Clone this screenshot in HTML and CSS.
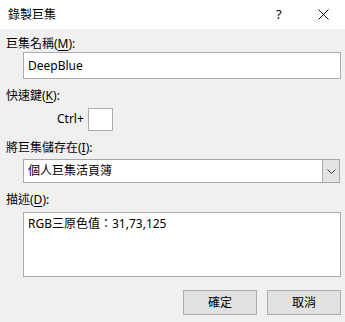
FILE: index.html
```html
<!DOCTYPE html>
<html lang="zh-Hant">
<head>
<meta charset="utf-8">
<title>錄製巨集</title>
<link rel="stylesheet" href="styles.css">
</head>
<body>
<div class="dialog">
  <div class="titlebar">
    <span class="title">錄製巨集</span>
    <span class="help">?</span>
    <span class="close">
      <svg width="11" height="11" viewBox="0 0 11 11"><path d="M0.5 0.5 L10.5 10.5 M10.5 0.5 L0.5 10.5" stroke="#111" stroke-width="1" fill="none"/></svg>
    </span>
  </div>
  <div class="content">
    <div class="label l1">巨集名稱(<u>M</u>):</div>
    <div class="field name">DeepBlue</div>
    <div class="label l2">快速鍵(<u>K</u>):</div>
    <div class="ctrlrow">
      <span class="ctrl">Ctrl+</span>
      <div class="field key"></div>
    </div>
    <div class="label l3">將巨集儲存在(<u>I</u>):</div>
    <div class="select">
      <div class="selval">個人巨集活頁簿</div>
      <div class="selbtn">
        <svg width="9" height="5" viewBox="0 0 9 5"><path d="M0.5 0.5 L4.5 4.5 L8.5 0.5" stroke="#444" stroke-width="1" fill="none"/></svg>
      </div>
    </div>
    <div class="label l4">描述(<u>D</u>):</div>
    <div class="field desc">RGB三原色值：31,73,125</div>
    <div class="buttons">
      <div class="btn">確定</div>
      <div class="btn">取消</div>
    </div>
  </div>
</div>
</body>
</html>
```
FILE: styles.css
```css
* { box-sizing: border-box; }
html, body { margin: 0; padding: 0; }
body {
  width: 345px;
  height: 322px;
  overflow: hidden;
  background: #f0f0f0;
  font-family: "Noto Sans", "Noto Sans CJK TC", sans-serif;
  font-size: 12px;
  color: #000;
}
.dialog { width: 345px; height: 322px; }
.titlebar {
  height: 29px;
  background: #fff;
  display: flex;
  align-items: center;
  position: relative;
}
.title {
  margin-left: 8px;
  font-size: 12px;
  line-height: 16px;
  color: #000;
}
.help {
  position: absolute;
  left: 276px;
  top: 6px;
  font-size: 13px;
  line-height: 16px;
}
.close {
  position: absolute;
  left: 318px;
  top: 9px;
  width: 11px;
  height: 11px;
  display: block;
}
.close svg { display: block; }
.content {
  padding: 0 4px 0 6px;
  display: flex;
  flex-direction: column;
}
.label {
  line-height: 16px;
  height: 16px;
}
.label u { text-underline-offset: 2px; }
.l1 { margin-top: 7px; }
.l2 { margin-top: 9px; }
.l3 { margin-top: 10px; }
.l4 { margin-top: 9px; }
.field {
  background: #fff;
  border: 1px solid #acacac;
}
.name {
  margin-left: 17px;
  width: 318px;
  height: 27px;
  line-height: 25px;
  padding-left: 4px;
}
.ctrlrow {
  margin-top: 4px;
  height: 22px;
  display: flex;
  align-items: center;
}
.ctrl {
  margin-left: 51px;
  width: 31px;
  line-height: 16px;
}
.key {
  width: 25px;
  height: 23px;
  margin-top: 1px;
}
.select {
  margin-top: 3px;
  margin-left: 17px;
  width: 317px;
  height: 24px;
  display: flex;
  border: 1px solid #a8a8a8;
  background: #fff;
}
.selval {
  flex: 1;
  line-height: 22px;
  padding-left: 4px;
}
.selbtn {
  width: 17px;
  background: #e3e3e3;
  border-left: 1px solid #acacac;
  display: flex;
  align-items: center;
  justify-content: center;
}
.selbtn svg { display: block; }
.desc {
  margin-top: 4px;
  margin-left: 17px;
  width: 318px;
  height: 65px;
  padding: 3px 4px;
  line-height: 16px;
}
.buttons {
  margin-top: 13px;
  display: flex;
  justify-content: flex-end;
  gap: 10px;
  padding-right: 0;
  margin-left: 176px;
}
.btn {
  width: 74px;
  height: 25px;
  background: #e1e1e1;
  border: 1px solid #adadad;
  display: flex;
  align-items: center;
  justify-content: center;
  line-height: 16px;
}
```
